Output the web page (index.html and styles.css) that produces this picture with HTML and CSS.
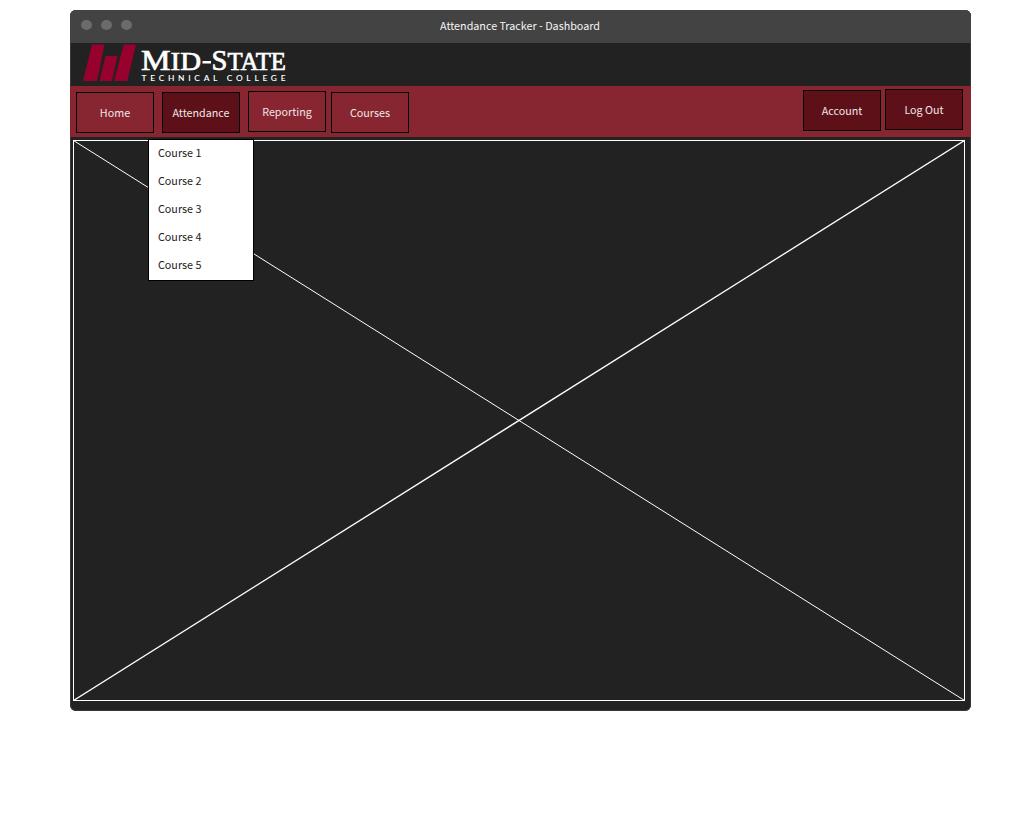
FILE: index.html
```html
<!DOCTYPE html>
<html lang="en">
<head>
<meta charset="utf-8">
<title>Attendance Tracker - Dashboard</title>
<link rel="stylesheet" href="styles.css">
</head>
<body>
<main class="window">
  <header class="titlebar">
    <span class="dots"><i></i><i></i><i></i></span>
    <span class="title">Attendance Tracker - Dashboard</span>
  </header>
  <div class="brand">
    <svg class="logo" width="210" height="43" viewBox="80 43 210 43" role="img" aria-label="Mid-State Technical College">
      <g fill="#98002e">
        <path d="M92 44.5h12.5L97 81H83z"/>
        <path d="M105.5 56h12L112 81H99.5z"/>
        <path d="M123.7 44.5H136L127.3 81H114z"/>
      </g>
      <g class="wordmark">
        <text x="141" y="70" textLength="60" lengthAdjust="spacingAndGlyphs">M<tspan class="small">ID</tspan></text>
        <text x="211.5" y="70" textLength="74.5" lengthAdjust="spacingAndGlyphs">S<tspan class="small">TATE</tspan></text>
      </g>
      <path d="M202.5 61h8.5v2.6h-8.5z" fill="#fff"/>
      <text class="tagline" x="141.5" y="81" textLength="144">TECHNICAL COLLEGE</text>
    </svg>
  </div>
  <nav class="nav">
    <a class="btn home">Home</a>
    <a class="btn attendance dark">Attendance</a>
    <a class="btn reporting">Reporting</a>
    <a class="btn courses">Courses</a>
    <a class="btn account dark">Account</a>
    <a class="btn logout dark">Log Out</a>
  </nav>
  <section class="content">
    <ul class="menu">
      <li>Course 1</li>
      <li>Course 2</li>
      <li>Course 3</li>
      <li>Course 4</li>
      <li>Course 5</li>
    </ul>
    <svg class="placeholder" width="892" height="561" viewBox="0 0 892 561">
      <path class="frame" d="M.5.5h891v560H.5z"/>
      <path d="M.5.5l891 560"/>
      <path class="rising" d="M.5 560.5l891-560"/>
    </svg>
  </section>
</main>
</body>
</html>
```
FILE: styles.css
```css
* { box-sizing: border-box; }
body {
  margin: 0;
  padding: 10px 0 0 70px;
  background: #fff;
  font: 10.75px/16px "Noto Sans CJK SC", "Noto Sans", sans-serif;
}
.window {
  width: 901px;
  height: 701px;
  background: #222;
  border-radius: 6px;
  box-shadow: inset 0 0 0 1px #383838;
  overflow: hidden;
}
.titlebar {
  position: relative;
  height: 33px;
  padding: 0 1px 1px 0;
  background: #434343;
  color: #f5f5f5;
  display: flex;
  justify-content: center;
  align-items: center;
}
.dots {
  position: absolute;
  left: 11px;
  top: 10px;
  display: flex;
  gap: 9px;
}
.dots i {
  width: 11px;
  height: 10px;
  border-radius: 50%;
  background: #6b6b6b;
}
.brand { height: 43px; padding-left: 10px; }
.logo { display: block; }
.wordmark {
  fill: #fff;
  font: 30px "Liberation Serif", serif;
  stroke: #fff;
  stroke-width: .7;
}
.small { font-size: 26px; }
.tagline {
  fill: #fff;
  font: 600 8.4px Lato, sans-serif;
}
.nav {
  height: 51px;
  padding: 6px 8px 0 6px;
  background: #872531;
  display: flex;
  align-items: flex-start;
}
.btn {
  width: 78px;
  height: 41px;
  border: 1px solid #000;
  color: #f0e6e7;
  display: flex;
  align-items: center;
  justify-content: center;
}
.dark { background: #5d1018; }
.attendance { margin-left: 8px; }
.reporting { margin: -1px 0 0 8px; }
.courses { margin-left: 5px; }
.account { margin: -2px 0 0 auto; }
.logout { margin: -3px 0 0 4px; }
.content { position: relative; padding: 3px 0 0 3px; }
.placeholder {
  display: block;
  fill: none;
  stroke: #fff;
  stroke-width: 1;
}
.frame { shape-rendering: crispEdges; }
.rising { stroke-width: 1.35; }
.menu {
  position: absolute;
  left: 78px;
  top: 2px;
  width: 106px;
  height: 142px;
  margin: 0;
  padding: 0;
  list-style: none;
  background: #fff;
  border: 1px solid #000;
  color: #1c1c1c;
}
.menu li {
  height: 28px;
  padding: 5px 0 0 9px;
}
```
